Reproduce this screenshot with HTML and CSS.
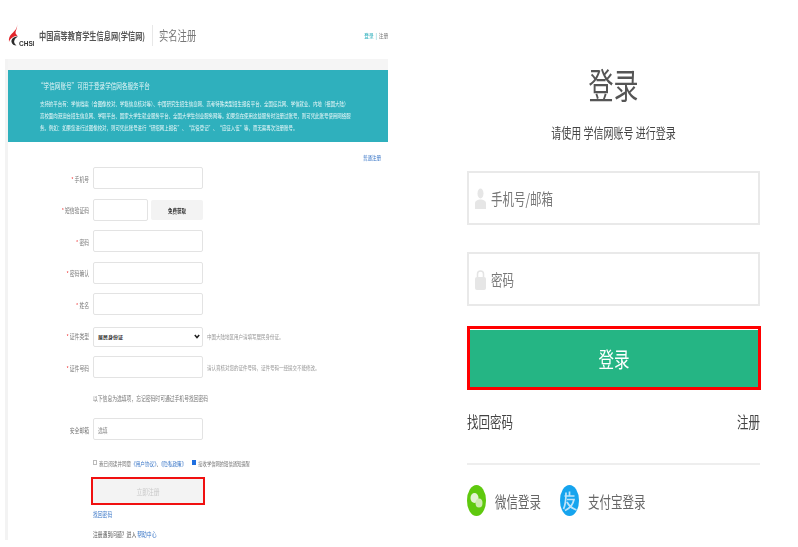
FILE: index.html
```html
<!DOCTYPE html>
<html lang="zh-CN">
<head>
<meta charset="utf-8">
<title>实名注册</title>
<link rel="stylesheet" href="styles.css">
</head>
<body>
<div class="page">
  <section class="reg">
    <header class="reg-head">
      <svg class="logo" width="26" height="24" viewBox="0 0 26 24">
        <path d="M9 0C9.600 4 7 6.500 4 9.500C1.500 12 .5 14 1 18C2.500 13.500 6 12.500 9.500 11.500C7.500 10.500 7 8.500 8 6.500C8.800 4.500 9.500 2.500 9 0Z" fill="#e2262c"/>
        <path d="M10 12.500C5.500 12.500 3 15 3.500 18C4 20.500 6 21.500 8.500 21.500C6.500 20 5.500 18 6.500 16C7.300 14.300 8.500 13.300 10 12.500Z" fill="#2b2b2b"/>
        <text x="11" y="22" class="logo-text">CHSI</text>
      </svg>
      <span class="site-name tall">中国高等教育学生信息网(学信网)</span>
      <span class="head-sep"></span>
      <span class="head-title tall">实名注册</span>
      <span class="head-links tall"><a class="teal-link">登录</a> <i>|</i> 注册</span>
    </header>
    <div class="reg-body">
      <div class="notice">
        <p class="notice-title tall">“学信网账号”可用于登录学信网各服务平台</p>
        <p class="notice-text tall">支持的平台有：学信档案（含图像校对、学籍信息核对等）、中国研究生招生信息网、高考特殊类型招生报名平台、全国征兵网、学信就业、内地（祖国大陆）<br>高校面向港澳台招生信息网、学职平台、国家大学生就业服务平台、全国大学生创业服务网等。如果您在使用这些服务时注册过账号，则可凭此账号使用网络服<br>务。例如：如果您进行过图像校对，则可凭此账号进行“研招网上报名”、“兵役登记”、“应征入伍”等，而无需再次注册账号。</p>
      </div>
      <div class="form-top"><a class="blue-link tall">普通注册</a></div>
      <div class="rows">
        <div class="row"><label class="lab tall"><b>*</b> 手机号</label><input class="inp"></div>
        <div class="row"><label class="lab tall"><b>*</b> 短信验证码</label><input class="inp inp-short"><button class="sms"><span class="tall">免费获取</span></button></div>
        <div class="row"><label class="lab tall"><b>*</b> 密码</label><input class="inp"></div>
        <div class="row"><label class="lab tall"><b>*</b> 密码确认</label><input class="inp"></div>
        <div class="row"><label class="lab tall"><b>*</b> 姓名</label><input class="inp"></div>
        <div class="row"><label class="lab tall"><b>*</b> 证件类型</label>
          <select class="inp sel"><option>居民身份证</option></select>
          <span class="hint tall">中国大陆地区用户请填写居民身份证。</span></div>
        <div class="row"><label class="lab tall"><b>*</b> 证件号码</label><input class="inp">
          <span class="hint tall">请认真核对您的证件号码，证件号码一经提交不能修改。</span></div>
      </div>
      <p class="optional tall">以下信息为选填项，忘记密码时可通过手机号找回密码</p>
      <div class="row"><label class="lab tall">安全邮箱</label><div class="inp inp-text"><span class="tall">选填</span></div></div>
      <div class="agree">
        <span class="box"></span><span class="tall">我已阅读并同意<a class="blue-link">《用户协议》</a>、<a class="blue-link">《隐私政策》</a></span>
        <span class="box box-on"></span><span class="tall agree-small">接收学信网的短信通知提醒</span>
      </div>
      <button class="submit"><span class="tall">立即注册</span></button>
      <p class="find"><a class="blue-link tall">找回密码</a></p>
      <p class="help tall">注册遇到问题？进入 <a class="blue-link">帮助中心</a></p>
    </div>
  </section>

  <section class="login">
    <h1 class="login-title tall">登录</h1>
    <p class="login-sub tall">请使用 学信网账号 进行登录</p>
    <div class="field">
      <svg class="field-icon" width="11" height="21" viewBox="0 0 11 21"><ellipse cx="5.500" cy="5.500" rx="3" ry="5" fill="#e6e6e6"/><path d="M0 21V15.500C0 12.500 3 11.500 5.500 11.500S11 12.500 11 15.500V21Z" fill="#e6e6e6"/></svg>
      <span class="tall">手机号/邮箱</span>
    </div>
    <div class="field field-2">
      <svg class="field-icon" width="11" height="21" viewBox="0 0 11 21"><path d="M2.500 8V5C2.500 1 8.500 1 8.500 5V8" fill="none" stroke="#e4e4e4" stroke-width="1.500"/><rect y="8" width="11" height="13" rx="2" fill="#e6e6e6"/></svg>
      <span class="tall">密码</span>
    </div>
    <button class="login-btn"><span class="tall">登录</span></button>
    <div class="login-links"><span class="tall">找回密码</span><span class="tall">注册</span></div>
    <div class="social">
      <svg width="19" height="31" viewBox="0 0 19 31"><ellipse cx="9.500" cy="15.500" rx="9.500" ry="15.500" fill="#5fc90e"/><ellipse cx="7.500" cy="13" rx="4" ry="5" fill="#e3f3d2"/><ellipse cx="12" cy="18" rx="3.500" ry="4.500" fill="#cfeab2"/></svg>
      <span class="tall soc-text">微信登录</span>
      <svg class="soc-gap" width="19" height="31" viewBox="0 0 19 31"><ellipse cx="9.500" cy="15.500" rx="9.500" ry="15.500" fill="#16a4ee"/><path d="M4.500 11H14.500M9.500 6.500V11M6 7.500C6 15 5.500 20 3.500 24M7 14.500H14C13 19 9.500 23.500 5 25.500M7 17C9 21 12 23.500 16.500 25" fill="none" stroke="#bfe4fa" stroke-width="1.700"/></svg>
      <span class="tall soc-text">支付宝登录</span>
    </div>
  </section>
</div>
</body>
</html>
```
FILE: styles.css
```css
* { box-sizing: border-box; }
html, body { margin: 0; padding: 0; background: #fff; }
body { font-family: "Noto Sans CJK SC", "Noto Sans", sans-serif; color: #555; width: 798px; height: 547px; overflow: hidden; }
p, h1 { margin: 0; font-weight: 400; }
.tall { display: inline-block; transform: scaleY(1.35); white-space: nowrap; filter: blur(.3px); }
.page { display: flex; align-items: flex-start; }

.reg { width: 383px; margin-left: 5px; flex: none; }
.reg-head { height: 59px; display: flex; align-items: center; padding-top: 12px; }
.logo { margin-left: 3px; flex: none; filter: blur(.3px); }
.logo-text { font: 700 6.500px "Liberation Sans", sans-serif; fill: #333; }
.site-name { margin-left: 5px; font-size: 7.200px; font-weight: 700; color: #555; line-height: 10px; width: 108px; }
.head-sep { width: 1px; height: 21px; background: #e8e8e8; margin-left: 5px; }
.head-title { margin-left: 6px; font-size: 9.300px; color: #777; line-height: 12px; margin-top: -2px; }
.head-links { margin-left: auto; font-size: 4.600px; color: #777; margin-top: -2px; }
.head-links i { font-style: normal; margin: 0 1px; color: #2fb0bd; }
.teal-link { color: #2fb0bd; }
.blue-link { color: #3c78c8; }

.reg-body { height: 481px; padding-top: 11px; border-left: 3px solid #f3f3f3; background: linear-gradient(#f5f5f5, #f5f5f5) no-repeat top / 100% 11px; }
.notice { height: 72px; background: #2fb0bd; color: #e8f7f8; padding: 12px 0 0 32px; }
.notice-title { font-size: 5.600px; line-height: 9px; display: block; margin-left: -2px; transform-origin: left center; }
.notice-text { display: block; font-size: 4.450px; line-height: 8.900px; margin-top: 7px; transform-origin: left top; }
.form-top { height: 25px; display: flex; justify-content: flex-end; padding: 13px 7px 0 0; font-size: 4.500px; line-height: 7px; }
.rows { display: flex; flex-direction: column; gap: 9.500px; }
.row { display: flex; align-items: center; height: 22px; font-size: 5px; }
.lab { width: 81px; text-align: right; font-size: 4.800px; color: #777; margin-right: 4px; flex: none; }
.lab b { color: #e33; font-weight: 400; }
.inp { width: 110px; height: 22px; border: 1px solid #e3e3e3; border-radius: 2px; background: #fff; padding: 0; flex: none; }
.inp-short { width: 55px; }
.sms { width: 52px; height: 20px; margin-left: 3px; border: 0; border-radius: 2px; background: #f3f3f3; padding: 0; font: 700 4.500px "Noto Sans CJK SC", sans-serif; color: #333; }
.sel { height: 20px; align-self: flex-end; appearance: none; -webkit-appearance: none; font: 700 5px "Noto Sans CJK SC", sans-serif; color: #333; padding-left: 4px; background: #fff url("data:image/svg+xml,%3Csvg xmlns='http://www.w3.org/2000/svg' width='6' height='5' viewBox='0 0 6 5'%3E%3Cpath d='M.8 1L3 3.600 5.200 1' fill='none' stroke='%23222' stroke-width='1.500'/%3E%3C/svg%3E") no-repeat right 2px center; }
.hint { margin-left: 4px; font-size: 4.500px; color: #999; }
.optional { margin: 15px 0 16px 85px; font-size: 4.800px; line-height: 9px; color: #777; display: block; transform-origin: left center; }
.inp-text { font-size: 4.800px; color: #888; padding: 6px 0 0 4px; line-height: 9px; }
.agree { display: flex; align-items: center; height: 9px; margin: 18px 0 0 85px; font-size: 4.600px; color: #777; }
.agree-small { font-size: 4.300px; }
.box { width: 4px; height: 5px; border: 1px solid #bbb; margin-right: 2px; }
.box-on { margin-left: 6px; background: #1f6fe0; border-color: #1f6fe0; }
.submit { display: block; width: 114px; height: 28px; margin: 10px 0 0 83px; border: 2px solid #f01010; background: #f3f3f3; font: 5.800px "Noto Sans CJK SC", sans-serif; color: #c8c8c8; padding: 0; }
.find { margin: 4px 0 0 85px; font-size: 4.800px; line-height: 9px; }
.help { margin: 11px 0 0 85px; font-size: 4.800px; line-height: 9px; display: block; transform-origin: left center; color: #555; }

.login { width: 293px; margin-left: 79px; flex: none; }
.login-title { margin-top: 65px; display: block; text-align: center; font-size: 25px; line-height: 39px; color: #555; transform: scaleY(1.4); }
.login-sub { display: block; margin-top: 19px; text-align: center; font-size: 10px; line-height: 20px; color: #444; }
.field { display: flex; align-items: center; height: 54px; margin-top: 28px; border: 2px solid #e9e9e9; padding-left: 6px; font-size: 11.500px; color: #777; }
.field-2 { margin-top: 27px; }
.field-icon { margin-right: 5px; flex: none; }
.login-btn { display: block; width: 294px; height: 64px; margin-top: 20px; border: 3px solid #ff0000; padding: 0; background: #25b584; box-shadow: inset 0 1px #fff; font: 15.500px "Noto Sans CJK SC", sans-serif; color: #fff; }
.login-links { display: flex; justify-content: space-between; margin-top: 22px; height: 18px; font-size: 11.500px; line-height: 18px; color: #444; }
.social { display: flex; align-items: center; margin-top: 33px; padding-top: 20px; border-top: 2px solid #eee; font-size: 11.500px; color: #666; }
.soc-text { margin-left: 9px; }
.soc-gap { margin-left: 19px; }
```
